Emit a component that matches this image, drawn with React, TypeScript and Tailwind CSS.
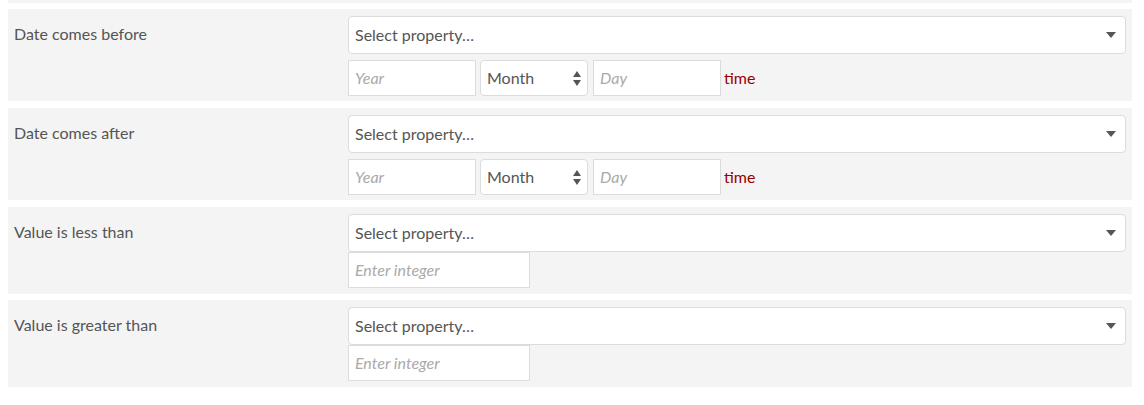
import React from "react";

const font = { fontFamily: "Lato, 'Noto Sans', sans-serif" };

function Caret() {
  return (
    <svg width="10" height="6" viewBox="0 0 10 6" className="shrink-0">
      <path d="M0 0 L10 0 L5 6 Z" fill="#555" />
    </svg>
  );
}

function SelectProperty() {
  return (
    <div className="flex h-[38px] items-center justify-between rounded-[4px] border border-[#dcdcdc] bg-white pl-[6px] pr-[9px]">
      <span className="text-[16px] text-[#555]">Select property…</span>
      <Caret />
    </div>
  );
}

function DateInputs() {
  return (
    <div className="mt-[6px] flex items-center">
      <div className="flex h-[36px] w-[128px] items-center border border-[#dcdcdc] bg-white pl-[6px]">
        <span className="text-[16px] italic text-[#aaa]">Year</span>
      </div>
      <div className="ml-[4px] flex h-[36px] w-[108px] items-center justify-between rounded-[4px] border border-[#dcdcdc] bg-white pl-[6px] pr-[6px]">
        <span className="text-[16px] text-[#555]">Month</span>
        <svg width="8" height="15" viewBox="0 0 8 15">
          <path d="M0 6 L8 6 L4 0 Z" fill="#555" />
          <path d="M0 9 L8 9 L4 15 Z" fill="#555" />
        </svg>
      </div>
      <div className="ml-[5px] flex h-[36px] w-[128px] items-center border border-[#dcdcdc] bg-white pl-[6px]">
        <span className="text-[16px] italic text-[#aaa]">Day</span>
      </div>
      <span className="ml-[3px] text-[16px] text-[#990000]">time</span>
    </div>
  );
}

function IntegerInput() {
  return (
    <div className="flex h-[36px] w-[182px] items-center border border-[#dcdcdc] bg-white pl-[6px]">
      <span className="text-[16px] italic text-[#aaa]">Enter integer</span>
    </div>
  );
}

function Row({ label, kind, mb }: { label: string; kind: "date" | "int"; mb: string }) {
  return (
    <div className={`flex bg-[#f4f4f4] pt-[7px] ${kind === "date" ? "pb-[5px]" : "pb-[6px]"} ${mb}`}>
      <div className="w-[340px] shrink-0 pl-[6px] pt-[7px] text-[16px] leading-[22px] text-[#555]">{label}</div>
      <div className="flex-1 pr-[6px]">
        <SelectProperty />
        {kind === "date" ? <DateInputs /> : <IntegerInput />}
      </div>
    </div>
  );
}

export default function App() {
  return (
    <div className="h-[405px] w-[1144px] bg-white pl-[8px] pr-[12px]" style={font}>
      <div className="mb-[6px] h-[3px] bg-[#f4f4f4]" />
      <Row label="Date comes before" kind="date" mb="mb-[7px]" />
      <Row label="Date comes after" kind="date" mb="mb-[7px]" />
      <Row label="Value is less than" kind="int" mb="mb-[6px]" />
      <Row label="Value is greater than" kind="int" mb="mb-0" />
    </div>
  );
}
